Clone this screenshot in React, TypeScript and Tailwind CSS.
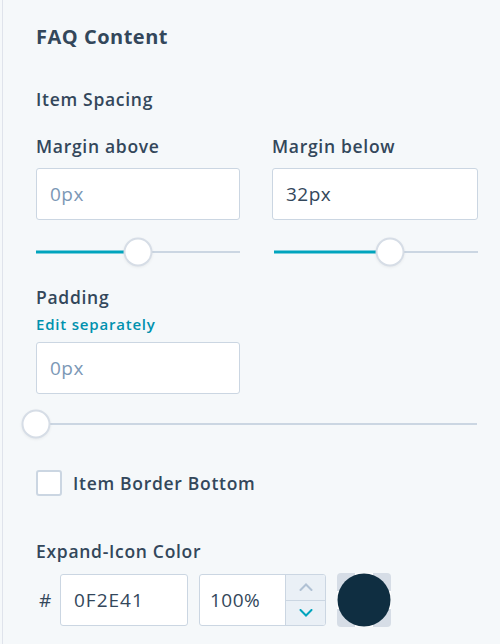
import React from "react";

function Slider({ pct, className = "" }: { pct: number; className?: string }) {
  return (
    <div className={`relative h-[30px] ${className}`}>
      <div className="absolute left-0 right-0 top-1/2 h-[2px] -translate-y-1/2 bg-[#cbd6e2]" />
      <div
        className="absolute left-0 top-1/2 h-[3px] -translate-y-1/2 bg-[#00a4bd]"
        style={{ width: `${pct}%` }}
      />
      <div
        className="absolute top-1/2 h-[29px] w-[29px] -translate-x-1/2 -translate-y-1/2 rounded-full border-2 border-[#d6dde6] bg-white shadow-[0_1px_3px_rgba(0,0,0,0.06)]"
        style={{ left: `${pct}%` }}
      />
    </div>
  );
}

function Field({ value, placeholder }: { value?: string; placeholder?: string }) {
  return (
    <div className="flex h-[52px] items-center rounded-[3px] border border-[#cbd6e2] bg-white px-[13px] text-[19px] tracking-[0.5px]">
      {value ? (
        <span className="text-[#33475b]">{value}</span>
      ) : (
        <span className="text-[#7c98b6]">{placeholder}</span>
      )}
    </div>
  );
}

const label = "text-[17.5px] font-semibold leading-[24px] tracking-[0.7px]";

export default function App() {
  return (
    <div
      className="min-h-[644px] w-[500px] bg-[#f5f8fa] pl-[2px] text-[#33475b]"
      style={{ fontFamily: "'Open Sans', 'Noto Sans', sans-serif" }}
    >
      <div className="min-h-[644px] border-l border-[#dfe3eb] pl-[33px] pr-[22px] pt-[24px]">
        <h2 className="text-[20px] font-bold leading-[26px] tracking-[0.5px]">FAQ Content</h2>

        <div className={`mt-[37px] ${label}`}>Item Spacing</div>

        <div className="mt-[23px] grid grid-cols-[204px_206px] gap-x-[32px]">
          <div>
            <div className={label}>Margin above</div>
            <div className="mt-[10px]">
              <Field placeholder="0px" />
            </div>
            <Slider pct={50} className="mt-[17px]" />
          </div>
          <div>
            <div className={label}>Margin below</div>
            <div className="mt-[10px]">
              <Field value="32px" />
            </div>
            <Slider pct={57} className="mt-[17px] ml-[2px]" />
          </div>
        </div>

        <div className={`mt-[18px] ${label}`}>Padding</div>
        <div className="mt-[5px] text-[15px] font-semibold leading-[20px] tracking-[0.8px] text-[#0091ae]">
          Edit separately
        </div>
        <div className="mt-[8px] w-[204px]">
          <Field placeholder="0px" />
        </div>
        <Slider pct={3} className="-ml-[14px] mt-[15px] w-[455px]" />

        <label className="mt-[31px] flex items-center gap-[11px]">
          <span className="h-[26px] w-[26px] rounded-[3px] border-2 border-[#cbd6e2] bg-white" />
          <span className={label}>Item Border Bottom</span>
        </label>

        <div className={`mt-[43px] ${label}`}>Expand-Icon Color</div>

        <div className="mt-[10px] flex items-center">
          <span className="w-[24px] pl-[3px] text-[19px]">#</span>
          <div className="flex h-[52px] w-[128px] items-center rounded-[3px] border border-[#cbd6e2] bg-white px-[13px] text-[19px] tracking-[1px]">
            0F2E41
          </div>
          <div className="ml-[11px] flex h-[52px] w-[127px] overflow-hidden rounded-[3px] border border-[#cbd6e2] bg-white">
            <div className="flex flex-1 items-center px-[10px] text-[19px] tracking-[0.5px]">100%</div>
            <div className="flex w-[40px] flex-col border-l border-[#cbd6e2] bg-[#eaf0f6]">
              <div className="flex flex-1 items-center justify-center border-b border-[#cbd6e2]">
                <svg width="14" height="8" viewBox="0 0 14 8" fill="none">
                  <path d="M1.5 7L7 1.5L12.5 7" stroke="#b0c1d4" strokeWidth="2" strokeLinecap="round" />
                </svg>
              </div>
              <div className="flex flex-1 items-center justify-center">
                <svg width="14" height="8" viewBox="0 0 14 8" fill="none">
                  <path d="M1.5 1L7 6.5L12.5 1" stroke="#00a4bd" strokeWidth="2" strokeLinecap="round" />
                </svg>
              </div>
            </div>
          </div>
          <div className="relative ml-[11px] h-[54px] w-[54px]">
            <div className="grid h-full w-full grid-cols-3 grid-rows-3 overflow-hidden rounded-[4px]">
              <div className="bg-[#d6dde6]" />
              <div className="bg-white" />
              <div className="bg-[#d6dde6]" />
              <div className="bg-white" />
              <div className="bg-[#d6dde6]" />
              <div className="bg-white" />
              <div className="bg-[#d6dde6]" />
              <div className="bg-white" />
              <div className="bg-[#d6dde6]" />
            </div>
            <div className="absolute left-1/2 top-1/2 h-[53px] w-[53px] -translate-x-1/2 -translate-y-1/2 rounded-full bg-[#0f2e41]" />
          </div>
        </div>
      </div>
    </div>
  );
}
